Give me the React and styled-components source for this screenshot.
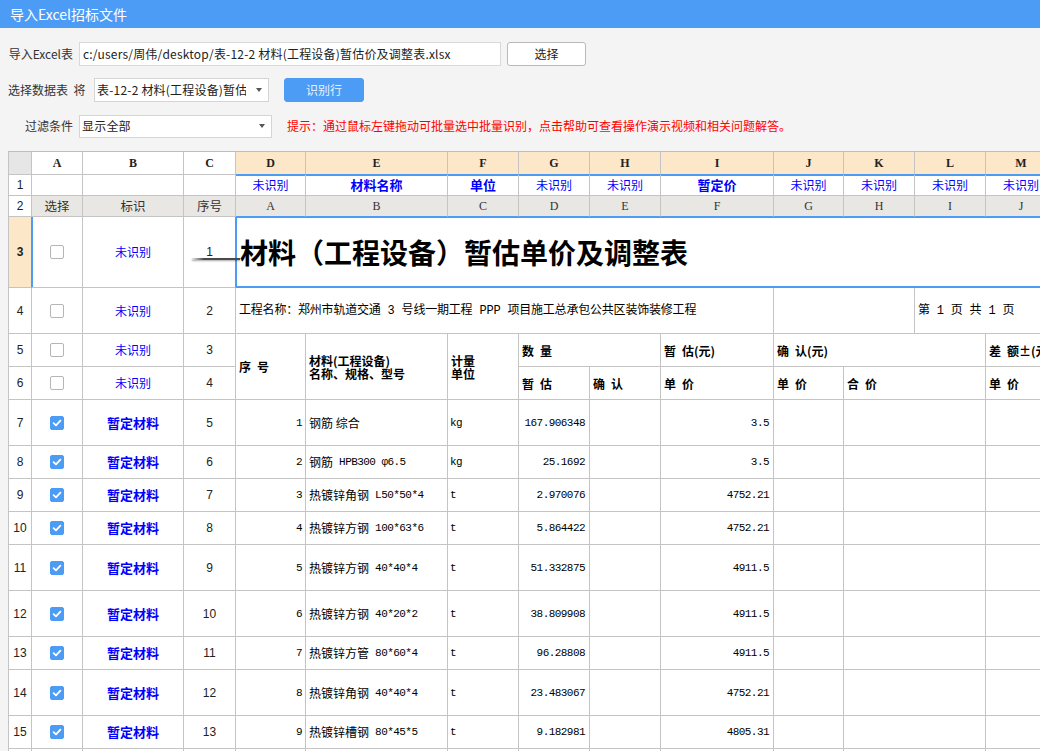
import React from 'react';
import styled, { createGlobalStyle } from 'styled-components';

const BLUE = '#4c9cf6';
const LINE = '#c4c4c4';
const INK = '#0000ff';
const JUSTIFY = { left: 'flex-start', right: 'flex-end', center: 'center' };

const GlobalStyle = createGlobalStyle`
  html, body { margin: 0; padding: 0; }
  body { font-family: "Noto Sans CJK SC", sans-serif; background: #f4f4f4; }
  * { box-sizing: border-box; }
`;

const Window = styled.div`
  width: 1040px;
  height: 751px;
  overflow: hidden;
  background: #f4f4f4;
  display: flex;
  flex-direction: column;
`;

const TitleBar = styled.div`
  flex: none;
  height: 28px;
  background: ${BLUE};
  color: #fff;
  display: flex;
  align-items: center;
  padding-left: 10px;
  font-size: 14px;
  line-height: 28px;
`;

const Form = styled.div`
  flex: none;
  display: flex;
  flex-direction: column;
  gap: 12px;
  padding: 14px 0 13px 8px;
`;

const FormRow = styled.div`
  display: flex;
  align-items: center;
  height: 24px;
`;

const Label = styled.span`
  flex: none;
  width: ${p => p.$width}px;
  text-align: ${p => p.$align || 'right'};
  margin-right: ${p => p.$gap ?? 6}px;
  font-size: 12px;
  line-height: 24px;
  color: #333;
  white-space: nowrap;
`;

const TextBox = styled.div`
  flex: none;
  width: ${p => p.$width}px;
  height: 24px;
  background: #fff;
  border: 1px solid #d9d9d9;
  padding: 0 3px;
  font-size: 12px;
  letter-spacing: 0.2px;
  line-height: 22px;
  color: #222;
  white-space: nowrap;
  overflow: hidden;
`;

const Button = styled.button`
  flex: none;
  width: ${p => p.$width}px;
  height: 24px;
  margin-left: ${p => p.$gap ?? 0}px;
  border-radius: 3px;
  border: 1px solid ${p => (p.$primary ? BLUE : '#b9b9b9')};
  background: ${p => (p.$primary ? BLUE : '#fff')};
  color: ${p => (p.$primary ? '#e9f2ff' : '#222')};
  font-family: "Noto Sans CJK SC", sans-serif;
  font-size: 12px;
  line-height: 22px;
  padding: 0;
`;

const Combo = styled.div`
  flex: none;
  width: ${p => p.$width}px;
  height: ${p => p.$height || 24}px;
  background: #fff;
  border: 1px solid #d5d5d5;
  display: flex;
  align-items: center;
  padding: 0 6px 0 2px;
`;

const ComboText = styled.span`
  flex: 1;
  min-width: 0;
  overflow: hidden;
  white-space: nowrap;
  font-size: 12px;
  letter-spacing: 0.2px;
  line-height: 22px;
  color: #222;
  margin-right: 10px;
`;

const Caret = styled.span`
  flex: none;
  width: 0;
  height: 0;
  border-left: 3px solid transparent;
  border-right: 3px solid transparent;
  border-top: 4px solid #555;
`;

const Hint = styled.span`
  margin-left: 15px;
  font-size: 12px;
  line-height: 24px;
  color: #ff0000;
  white-space: nowrap;
`;

const SheetViewport = styled.div`
  flex: 1;
  min-height: 0;
  overflow: hidden;
  padding-left: 8px;
`;

const Sheet = styled.div`
  display: grid;
  width: max-content;
  grid-template-columns: 23px 51px 101px 52px 70px 142px 71px 71px 71px 113px 70px 71px 71px 71px;
  grid-template-rows: 23px 21px 21px 71px 46px 33px 33px 46px 33px 33px 33px 46px 46px 33px 46px 33px 46px;
  border-left: 1px solid ${LINE};
  border-top: 1px solid #bdbdbd;
  background: #fff;
`;

const Cell = styled.div`
  min-width: 0;
  display: flex;
  align-items: center;
  justify-content: ${p => JUSTIFY[p.$align || 'center']};
  padding: 0 3px;
  border-right: 1px solid ${LINE};
  border-bottom: 1px solid ${LINE};
  background: #fff;
  grid-column: ${p => (p.$span ? `span ${p.$span}` : 'auto')};
  grid-row: ${p => (p.$rows ? `span ${p.$rows}` : 'auto')};
  white-space: nowrap;
  overflow: hidden;
  font-size: 12px;
  line-height: 16px;
  color: #000;
`;

const Corner = styled(Cell)`
  background: #e6e6e6;
`;

const ColHead = styled(Cell)`
  font-family: "Liberation Serif", serif;
  font-weight: bold;
  color: #222;
  background: ${p => (p.$mapped ? '#fde7c9' : '#fff')};
  border-bottom-color: ${p => (p.$mapped ? BLUE : LINE)};
`;

const RowHead = styled(Cell)`
  font-family: "Liberation Sans", sans-serif;
  color: #222;
  background: ${p => (p.$active ? '#fde7c9' : '#fff')};
  font-weight: ${p => (p.$active ? 'bold' : 'normal')};
  border-right-color: ${p => (p.$active ? BLUE : LINE)};
`;

const FieldCell = styled(Cell)`
  color: ${INK};
  font-weight: ${p => (p.$bold ? 'bold' : 'normal')};
  font-size: ${p => (p.$bold ? 13 : 12)}px;
  box-shadow: ${p => (p.$mapped ? `inset 0 1px 0 ${BLUE}` : 'none')};
`;

const KeyCell = styled(Cell)`
  background: #e8e7e3;
  color: #333;
  font-family: ${p => (p.$mapped ? '"Liberation Serif", serif' : '"Noto Sans CJK SC", sans-serif')};
  font-size: ${p => (p.$mapped ? 12 : 12.5)}px;
  border-bottom-color: ${p => (p.$mapped ? BLUE : LINE)};
`;

const CheckCell = styled(Cell)`
  box-shadow: ${p => (p.$selected ? `inset 1px 0 0 ${BLUE}` : 'none')};
`;

const Box = styled.span`
  width: 14px;
  height: 14px;
  border-radius: 2px;
  display: inline-flex;
  align-items: center;
  justify-content: center;
  background: ${p => (p.$on ? BLUE : '#fff')};
  border: 1px solid ${p => (p.$on ? BLUE : '#b5b5b5')};
`;

const MarkCell = styled(Cell)`
  color: ${INK};
  font-weight: ${p => (p.$bold ? 'bold' : 'normal')};
  font-size: ${p => (p.$bold ? 13 : 12)}px;
`;

const SeqCell = styled(Cell)`
  font-family: "Liberation Sans", sans-serif;
  color: #222;
  border-right-color: ${p => (p.$edge ? BLUE : LINE)};
`;

const TitleCell = styled(Cell)`
  position: relative;
  overflow: visible;
  padding-left: 4px;
  font-size: 28px;
  line-height: 36px;
  font-weight: bold;
  border-bottom-color: ${BLUE};
  box-shadow: inset 1px 1px 0 ${BLUE}, inset 0 -1px 0 ${BLUE};

  &::before {
    content: '';
    position: absolute;
    left: -44px;
    top: 41px;
    width: 48px;
    height: 2px;
    background: linear-gradient(to right, rgba(90, 90, 90, 0.15), #4a4a4a 25%);
    box-shadow: 0 1px 2px rgba(0, 0, 0, 0.35);
  }
`;

const InfoCell = styled(Cell)`
  font-family: "Liberation Mono", "Noto Sans CJK SC", monospace;
  font-size: 12px;
  letter-spacing: -0.2px;
`;

const THead = styled(Cell)`
  font-weight: bold;
  line-height: 13px;
  white-space: pre;
`;

const NumCell = styled(Cell)`
  font-family: "Liberation Mono", monospace;
  font-size: 11px;
  letter-spacing: -0.55px;
  padding-right: ${p => p.$pad ?? 4}px;
`;

const TextCell = styled(Cell)`
  padding-left: ${p => p.$pad ?? 3}px;
`;

const Spec = styled.span`
  font-family: "Liberation Mono", monospace;
  font-size: 11px;
  letter-spacing: -0.55px;
`;

const SP = '\u2002';

const LETTERS = ['D', 'E', 'F', 'G', 'H', 'I', 'J', 'K', 'L', 'M'];
const SOURCES = ['A', 'B', 'C', 'D', 'E', 'F', 'G', 'H', 'I', 'J'];
const FIELDS = [
  ['未识别'], ['材料名称', true], ['单位', true], ['未识别'], ['未识别'],
  ['暂定价', true], ['未识别'], ['未识别'], ['未识别'], ['未识别'],
];

const ITEMS = [
  { row: 7, seq: 5, no: 1, name: '钢筋 综合', spec: '', unit: 'kg', qty: '167.906348', price: '3.5' },
  { row: 8, seq: 6, no: 2, name: '钢筋', spec: 'HPB300 φ6.5', unit: 'kg', qty: '25.1692', price: '3.5' },
  { row: 9, seq: 7, no: 3, name: '热镀锌角钢', spec: 'L50*50*4', unit: 't', qty: '2.970076', price: '4752.21' },
  { row: 10, seq: 8, no: 4, name: '热镀锌方钢', spec: '100*63*6', unit: 't', qty: '5.864422', price: '4752.21' },
  { row: 11, seq: 9, no: 5, name: '热镀锌方钢', spec: '40*40*4', unit: 't', qty: '51.332875', price: '4911.5' },
  { row: 12, seq: 10, no: 6, name: '热镀锌方钢', spec: '40*20*2', unit: 't', qty: '38.809908', price: '4911.5' },
  { row: 13, seq: 11, no: 7, name: '热镀锌方管', spec: '80*60*4', unit: 't', qty: '96.28808', price: '4911.5' },
  { row: 14, seq: 12, no: 8, name: '热镀锌角钢', spec: '40*40*4', unit: 't', qty: '23.483067', price: '4752.21' },
  { row: 15, seq: 13, no: 9, name: '热镀锌槽钢', spec: '80*45*5', unit: 't', qty: '9.182981', price: '4805.31' },
];

function Check({ on }) {
  return (
    <Box $on={on}>
      {on && (
        <svg width="10" height="10" viewBox="0 0 10 10">
          <polyline points="1.6,5.2 4,7.4 8.4,2.6" fill="none" stroke="#fff" strokeWidth="1.8" strokeLinecap="round" strokeLinejoin="round" />
        </svg>
      )}
    </Box>
  );
}

function Lead({ row, seq, on, bold, mark, active }) {
  return (
    <>
      <RowHead $active={active}>{row}</RowHead>
      <CheckCell $selected={active}><Check on={on} /></CheckCell>
      <MarkCell $bold={bold}>{mark}</MarkCell>
      <SeqCell $edge={active}>{seq}</SeqCell>
    </>
  );
}

export default function App() {
  return (
    <Window>
      <GlobalStyle />
      <TitleBar>导入Excel招标文件</TitleBar>
      <Form>
        <FormRow>
          <Label $width={65}>导入Excel表</Label>
          <TextBox $width={422}>c:/users/周伟/desktop/表-12-2 材料(工程设备)暂估价及调整表.xlsx</TextBox>
          <Button $width={79} $gap={6}>选择</Button>
        </FormRow>
        <FormRow>
          <Label $width={86} $align="left" $gap={0}>选择数据表&nbsp;&nbsp;将</Label>
          <Combo $width={175}>
            <ComboText>表-12-2 材料(工程设备)暂估价及调整表</ComboText>
            <Caret />
          </Combo>
          <Button $width={80} $gap={15} $primary>识别行</Button>
        </FormRow>
        <FormRow>
          <Label $width={65}>过滤条件</Label>
          <Combo $width={193} $height={23}>
            <ComboText>显示全部</ComboText>
            <Caret />
          </Combo>
          <Hint>提示：通过鼠标左键拖动可批量选中批量识别，点击帮助可查看操作演示视频和相关问题解答。</Hint>
        </FormRow>
      </Form>

      <SheetViewport>
        <Sheet>
          <Corner />
          <ColHead>A</ColHead>
          <ColHead>B</ColHead>
          <ColHead>C</ColHead>
          {LETTERS.map(l => <ColHead key={l} $mapped>{l}</ColHead>)}

          <RowHead>1</RowHead>
          <Cell />
          <Cell />
          <Cell />
          {FIELDS.map(([t, b], i) => <FieldCell key={i} $bold={b} $mapped>{t}</FieldCell>)}

          <RowHead>2</RowHead>
          <KeyCell>选择</KeyCell>
          <KeyCell>标识</KeyCell>
          <KeyCell>序号</KeyCell>
          {SOURCES.map(s => <KeyCell key={s} $mapped>{s}</KeyCell>)}

          <Lead row={3} seq={1} mark="未识别" active />
          <TitleCell $span={10} $align="left">材料（工程设备）暂估单价及调整表</TitleCell>

          <Lead row={4} seq={2} mark="未识别" />
          <InfoCell $span={6} $align="left">工程名称：郑州市轨道交通 3 号线一期工程 PPP 项目施工总承包公共区装饰装修工程</InfoCell>
          <InfoCell $span={2} />
          <InfoCell $span={2} $align="left">第 1 页 共 1 页</InfoCell>

          <Lead row={5} seq={3} mark="未识别" />
          <THead $rows={2} $align="left">{`序${SP}号`}</THead>
          <THead $rows={2} $align="left">{'材料(工程设备)\n名称、规格、型号'}</THead>
          <THead $rows={2} $align="left">{'计量\n单位'}</THead>
          <THead $span={2} $align="left">{`数${SP}量`}</THead>
          <THead $align="left">{`暂${SP}估(元)`}</THead>
          <THead $span={3} $align="left">{`确${SP}认(元)`}</THead>
          <THead $align="left">{`差${SP}额±(元)`}</THead>

          <Lead row={6} seq={4} mark="未识别" />
          <THead $align="left">{`暂${SP}估`}</THead>
          <THead $align="left">{`确${SP}认`}</THead>
          <THead $align="left">{`单${SP}价`}</THead>
          <THead $align="left">{`单${SP}价`}</THead>
          <THead $span={2} $align="left">{`合${SP}价`}</THead>
          <THead $align="left">{`单${SP}价`}</THead>

          {ITEMS.map(it => (
            <React.Fragment key={it.row}>
              <Lead row={it.row} seq={it.seq} mark="暂定材料" on bold />
              <NumCell $align="right" $pad={3}>{it.no}</NumCell>
              <TextCell $align="left">
                {it.name}
                {it.spec && <Spec>&nbsp;{it.spec}</Spec>}
              </TextCell>
              <TextCell $align="left" $pad={2}><Spec>{it.unit}</Spec></TextCell>
              <NumCell $align="right">{it.qty}</NumCell>
              <Cell />
              <NumCell $align="right">{it.price}</NumCell>
              <Cell />
              <Cell $span={2} />
              <Cell />
            </React.Fragment>
          ))}

          <Lead row={16} seq={14} mark="暂定材料" on bold />
          <Cell />
          <Cell />
          <Cell />
          <Cell />
          <Cell />
          <Cell />
          <Cell />
          <Cell $span={2} />
          <Cell />
        </Sheet>
      </SheetViewport>
    </Window>
  );
}
